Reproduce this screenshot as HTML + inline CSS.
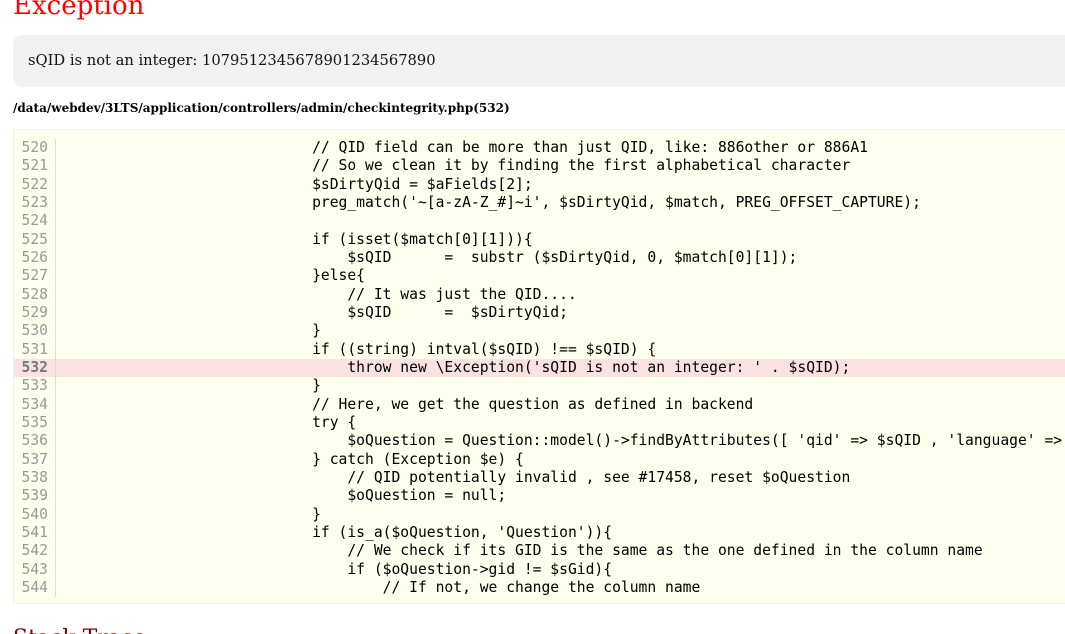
<!DOCTYPE html>
<html><head><meta charset="utf-8"><style>
html,body{margin:0;padding:0;background:#fff;width:1065px;height:634px;overflow:hidden;position:relative}
h1{position:absolute;left:13px;top:-9px;margin:0;font:26px "DejaVu Serif","Liberation Serif",serif;color:#f00;font-weight:normal}
.msg{position:absolute;left:13px;top:35px;width:1052px;height:52px;background:#f2f2f2;border-radius:9px 0 0 9px;font:14.7px "DejaVu Serif","Liberation Serif",serif;color:#111}
.msg span{position:absolute;left:15px;top:17px}
.path{position:absolute;left:13px;top:101px;font:bold 12px "DejaVu Serif","Liberation Serif",serif;color:#000}
.code{position:absolute;left:13px;top:129px;width:1052px;height:475px;background:#ffffee;border:1px solid #eee;border-right:none;box-sizing:border-box;overflow:hidden}
.ln{position:absolute;left:0;width:1051px;height:18.33px;font:14.67px/18.33px "DejaVu Sans Mono",monospace;color:#000;white-space:pre;overflow:hidden}
.ln b{font-weight:normal;color:#999;display:inline-block;width:34px;text-align:right;padding-right:7px;border-right:1px solid #ddd}
.ln.hl{background:#fbe2e2}
.ln.hl b{font-weight:bold;color:#777}
.ln i{font-style:normal;position:absolute;left:51px;top:0}
h2{position:absolute;left:13px;top:626px;margin:0;font:22px "DejaVu Serif","Liberation Serif",serif;color:#800000;font-weight:normal}
</style></head><body>
<h1>Exception</h1>
<div class="msg"><span>sQID is not an integer: 1079512345678901234567890</span></div>
<div class="path">/data/webdev/3LTS/application/controllers/admin/checkintegrity.php(532)</div>
<div class="code" id="c"></div>
<h2>Stack Trace</h2>
<script>
var L=[
"                            // QID field can be more than just QID, like: 886other or 886A1",
"                            // So we clean it by finding the first alphabetical character",
"                            $sDirtyQid = $aFields[2];",
"                            preg_match('~[a-zA-Z_#]~i', $sDirtyQid, $match, PREG_OFFSET_CAPTURE);",
"",
"                            if (isset($match[0][1])){",
"                                $sQID      =  substr ($sDirtyQid, 0, $match[0][1]);",
"                            }else{",
"                                // It was just the QID....",
"                                $sQID      =  $sDirtyQid;",
"                            }",
"                            if ((string) intval($sQID) !== $sQID) {",
"                                throw new \\Exception('sQID is not an integer: ' . $sQID);",
"                            }",
"                            // Here, we get the question as defined in backend",
"                            try {",
"                                $oQuestion = Question::model()->findByAttributes([ 'qid' => $sQID , 'language' => $sBaseLanguage ]);",
"                            } catch (Exception $e) {",
"                                // QID potentially invalid , see #17458, reset $oQuestion",
"                                $oQuestion = null;",
"                            }",
"                            if (is_a($oQuestion, 'Question')){",
"                                // We check if its GID is the same as the one defined in the column name",
"                                if ($oQuestion->gid != $sGid){",
"                                    // If not, we change the column name"];
var c=document.getElementById('c'),h='';
for(var k=0;k<L.length;k++){var n=520+k;
h+='<div class="ln'+(n==532?' hl':'')+'" style="top:'+(9+k*18.33)+'px"><b>'+n+'</b><i>'+L[k].replace(/&/g,'&amp;').replace(/</g,'&lt;').replace(/>/g,'&gt;')+'</i></div>';}
c.innerHTML=h;
</script>
</body></html>
